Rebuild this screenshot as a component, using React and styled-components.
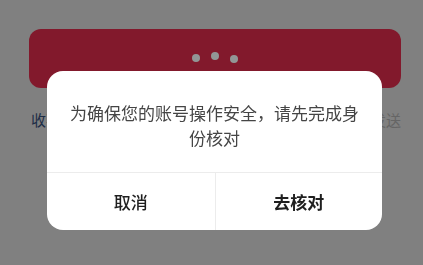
import styled, { createGlobalStyle } from "styled-components";

const GlobalStyle = createGlobalStyle`
  html, body {
    margin: 0;
    padding: 0;
    background: #d5d5d5;
    font-family: "Noto Sans CJK SC", "Noto Sans", sans-serif;
  }
`;

export default function App() {
  return (
    <>
      <GlobalStyle />
      <Page>
        <SubmitButton>
          <Dot $lift={-1} />
          <Dot $lift={-3} />
          <Dot $lift={0} />
        </SubmitButton>
        <LinkRow>
          <span className="help">收不到验证码？</span>
          <span className="resend">重新发送</span>
        </LinkRow>
      </Page>
      <Mask>
        <Dialog>
          <Message>为确保您的账号操作安全，请先完成身份核对</Message>
          <Actions>
            <ActionButton>取消</ActionButton>
            <ActionButton $primary>去核对</ActionButton>
          </Actions>
        </Dialog>
      </Mask>
    </>
  );
}

const Page = styled.div`
  height: 265px;
  padding: 29px 22px 0 29px;
  box-sizing: border-box;
`;

const SubmitButton = styled.div`
  height: 59px;
  border-radius: 12px;
  background: #d92b4a;
  display: flex;
  align-items: center;
  justify-content: center;
  gap: 11px;
`;

const Dot = styled.span`
  width: 8px;
  height: 8px;
  border-radius: 50%;
  background: #f4fbfa;
  transform: translateY(${(p) => p.$lift}px);
`;

const LinkRow = styled.div`
  display: flex;
  justify-content: space-between;
  margin-top: 22px;
  font-size: 15px;
  line-height: 20px;
  .help {
    color: #324b75;
    margin-left: 2px;
  }
  .resend {
    color: #a8a8a8;
  }
`;

const Mask = styled.div`
  position: fixed;
  inset: 0;
  background: rgba(0, 0, 0, 0.4);
  display: flex;
  align-items: flex-start;
  padding: 71px 0 0 47px;
`;

const Dialog = styled.div`
  width: 335px;
  background: #fff;
  border-radius: 16px;
  overflow: hidden;
`;

const Message = styled.div`
  padding: 29px 22px 22px;
  font-size: 17px;
  line-height: 25px;
  color: #454545;
  text-align: center;
`;

const Actions = styled.div`
  display: grid;
  grid-template-columns: 1fr 1fr;
  border-top: 1px solid #ececec;
`;

const ActionButton = styled.div`
  height: 57px;
  display: flex;
  align-items: center;
  justify-content: center;
  font-size: 17px;
  color: #1f1f1f;
  font-weight: ${(p) => (p.$primary ? 700 : 500)};
  & + & {
    border-left: 1px solid #ececec;
  }
`;
